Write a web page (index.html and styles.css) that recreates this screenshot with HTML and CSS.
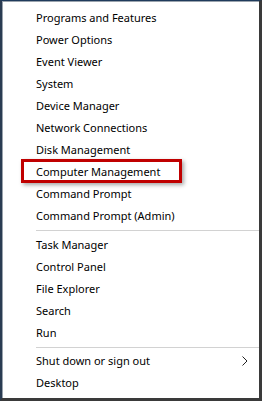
FILE: index.html
```html
<!DOCTYPE html>
<html lang="en">
<head>
  <meta charset="UTF-8" />
  <title>Quick Link Menu</title>
  <link rel="stylesheet" href="styles.css">
</head>
<body>
  <div class="menu">
    <ul class="group">
      <li>Programs and Features</li>
      <li>Power Options</li>
      <li>Event Viewer</li>
      <li>System</li>
      <li>Device Manager</li>
      <li>Network Connections</li>
      <li>Disk Management</li>
      <li class="highlight"><span class="mark">Computer Management</span></li>
      <li>Command Prompt</li>
      <li>Command Prompt (Admin)</li>
    </ul>
    <ul class="group">
      <li>Task Manager</li>
      <li>Control Panel</li>
      <li>File Explorer</li>
      <li>Search</li>
      <li>Run</li>
    </ul>
    <ul class="group last">
      <li class="sub">Shut down or sign out
        <svg class="arrow" width="6" height="10" viewBox="0 0 6 10"><polyline points="0.5,0.5 5,5 0.5,9.5" fill="none" stroke="#222" stroke-width="1"/></svg>
      </li>
      <li>Desktop</li>
    </ul>
  </div>
</body>
</html>
```

FILE: styles.css
```css
html, body {
  margin: 0;
  padding: 0;
  background: #fff;
}
.menu {
  width: 262px;
  height: 401px;
  box-sizing: border-box;
  border-style: solid;
  border-width: 1px 3px 3px 2px;
  border-color: #1f3b5c #3a3a3a #3a3a3a #2a3c52;
  box-shadow: inset 1px 1px 0 #9aa3ad;
  padding-top: 6px;
  font-family: "Noto Sans", "Open Sans", sans-serif;
  font-size: 11px;
  color: #000;
}
.group {
  list-style: none;
  margin: 0;
  padding: 0;
}
.group:first-child {
  margin-bottom: 3px;
}
.group + .group {
  margin-left: 34px;
  padding-top: 3px;
  border-top: 1px solid #d2d2d2;
}
.group + .group li {
  padding-left: 0;
}
.group.last {
  margin-top: 3px;
  padding-top: 2px;
}
.group li {
  height: 22px;
  line-height: 22px;
  padding-left: 34px;
  white-space: nowrap;
}
.highlight {
  position: relative;
}
.mark::before {
  content: "";
  position: absolute;
  left: 19px;
  top: -2px;
  width: 155px;
  height: 18px;
  border: 3px solid #c00000;
  box-shadow: 2px 2px 4px rgba(0, 0, 0, 0.35);
}
.sub {
  display: flex;
  align-items: center;
  justify-content: space-between;
  padding-right: 11px;
}
.arrow {
  display: block;
}
```
